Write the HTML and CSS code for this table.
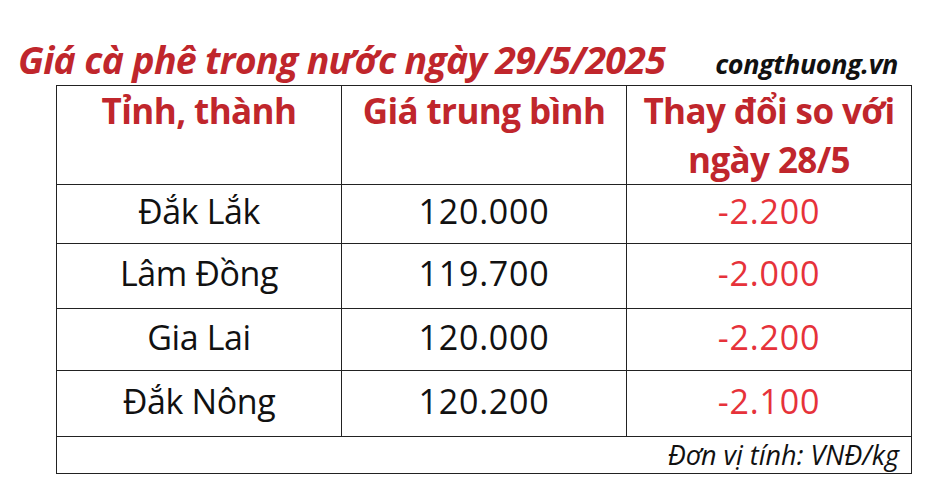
FILE: index.html
```html
<!DOCTYPE html>
<html lang="vi">
<head>
<meta charset="utf-8">
<link rel="stylesheet" href="styles.css">
</head>
<body>
<div class="page">
  <div class="title-row">
    <h1 class="title">Giá cà phê trong nước ngày 29/5/2025</h1>
    <span class="brand">congthuong.vn</span>
  </div>
  <table class="prices">
    <thead>
      <tr class="head">
        <th>Tỉnh, thành</th>
        <th>Giá trung bình</th>
        <th>Thay đổi so với<br>ngày 28/5</th>
      </tr>
    </thead>
    <tbody>
      <tr class="r1"><td>Đắk Lắk</td><td class="num">120.000</td><td class="num neg">-2.200</td></tr>
      <tr class="r2"><td>Lâm Đồng</td><td class="num">119.700</td><td class="num neg">-2.000</td></tr>
      <tr class="r3"><td>Gia Lai</td><td class="num">120.000</td><td class="num neg">-2.200</td></tr>
      <tr class="r4"><td>Đắk Nông</td><td class="num">120.200</td><td class="num neg">-2.100</td></tr>
      <tr class="foot"><td colspan="3">Đơn vị tính: VNĐ/kg</td></tr>
    </tbody>
  </table>
</div>
</body>
</html>
```

FILE: styles.css
```css
html, body {
  margin: 0;
  padding: 0;
  background: #ffffff;
}
.page {
  font-family: "Open Sans", "Noto Sans", sans-serif;
  width: 929px;
  height: 495px;
  box-sizing: border-box;
  padding: 40px 0 0 18px;
}
.title-row {
  display: flex;
  align-items: baseline;
  height: 45px;
}
.title {
  margin: 0;
  font-size: 37.5px;
  font-weight: 700;
  font-style: italic;
  color: #c0262c;
  letter-spacing: -0.7px;
  line-height: 40px;
}
.brand {
  margin-left: 50px;
  font-size: 27px;
  font-weight: 700;
  font-style: italic;
  color: #111;
  letter-spacing: -0.4px;
}
.prices {
  margin-left: 38px;
  border-collapse: collapse;
  width: 853px;
  table-layout: fixed;
}
.prices th, .prices td {
  border: 1.5px solid #222;
  text-align: center;
  padding: 0;
}
.prices th {
  width: 284px;
  height: 95px;
  vertical-align: top;
  font-size: 35px;
  font-weight: 700;
  color: #c0262c;
  line-height: 49px;
  letter-spacing: -0.6px;
  padding-top: 0;
}
.prices td {
  height: 58px;
  font-size: 34px;
  color: #111;
  letter-spacing: -0.4px;
  line-height: 40px;
  padding-bottom: 6px;
}
.prices td.num {
  letter-spacing: 0.8px;
}
.prices tr.r1 td {
  height: 52px;
}
.prices tr.r2 td {
  height: 58px;
}
.prices tr.r3 td {
  height: 55px;
}
.prices tr.r4 td {
  height: 59px;
}
.prices td.neg {
  color: #e6323a;
}
.prices tr.foot td {
  height: 36px;
  text-align: right;
  font-size: 27px;
  font-style: italic;
  line-height: 30px;
  padding: 0 12px 0 0;
  letter-spacing: 0;
}
```
